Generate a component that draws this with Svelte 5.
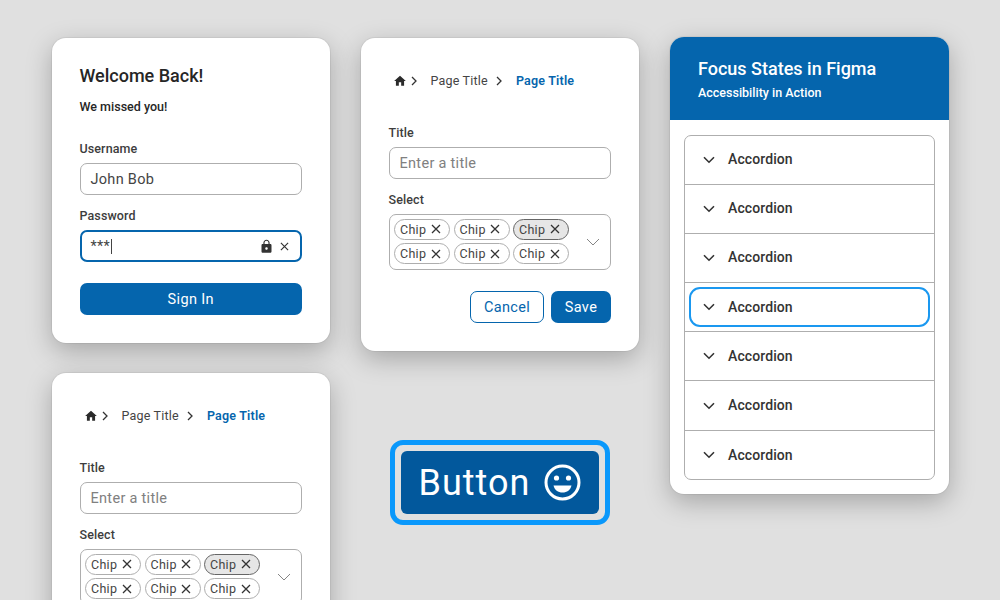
<script>
  const chips = [false, false, true, false, false, false];
  const rows = [false, false, false, true, false, false, false];
</script>

{#snippet closeIcon(size)}
  <svg class="x" width={size} height={size} viewBox="0 0 10 10"><path d="M1 1l8 8M9 1l-8 8" /></svg>
{/snippet}

{#snippet crumbArrow()}
  <svg class="crumb-arrow" width="6" height="10" viewBox="0 0 6 10"><path d="M1 1l4 4-4 4" /></svg>
{/snippet}

{#snippet formCard()}
  <div class="card form-card">
    <div class="crumbs">
      <svg class="home" width="14" height="14" viewBox="0 0 24 24"><path d="M10 20v-6h4v6h5v-8h3L12 3 2 12h3v8z" /></svg>
      {@render crumbArrow()}
      <span class="crumb">Page Title</span>
      {@render crumbArrow()}
      <span class="crumb current">Page Title</span>
    </div>

    <div class="label title-label">Title</div>
    <div class="input placeholder">Enter a title</div>

    <div class="label select-label">Select</div>
    <div class="select">
      <div class="chips">
        {#each chips as active}
          <span class="chip" class:active>Chip {@render closeIcon(10)}</span>
        {/each}
      </div>
      <svg class="select-arrow" width="14" height="8" viewBox="0 0 14 8"><path d="M1 1l6 6 6-6" /></svg>
    </div>

    <div class="actions">
      <button class="btn outline">Cancel</button>
      <button class="btn solid">Save</button>
    </div>
  </div>
{/snippet}

<div class="page">
  <div class="col col-1">
    <div class="card login">
      <h1>Welcome Back!</h1>
      <p class="sub">We missed you!</p>

      <div class="label user-label">Username</div>
      <div class="input">John Bob</div>

      <div class="label pass-label">Password</div>
      <div class="input focused">
        <span class="value">***<i class="caret"></i></span>
        <svg class="lock" width="15" height="15" viewBox="0 0 24 24"><path d="M18 8h-1V6c0-2.76-2.24-5-5-5S7 3.24 7 6v2H6c-1.1 0-2 .9-2 2v10c0 1.1.9 2 2 2h12c1.1 0 2-.9 2-2V10c0-1.1-.9-2-2-2zm-6 9c-1.1 0-2-.9-2-2s.9-2 2-2 2 .9 2 2-.9 2-2 2zm3.1-9H8.9V6c0-1.71 1.39-3.1 3.1-3.1 1.71 0 3.1 1.39 3.1 3.1v2z" /></svg>
        {@render closeIcon(9)}
      </div>

      <button class="btn solid sign-in">Sign In</button>
    </div>

    {@render formCard()}
  </div>

  <div class="col col-2">
    {@render formCard()}

    <div class="big-ring">
      <button class="big-button">
        Button
        <svg width="37" height="37" viewBox="0 0 37 37">
          <circle class="face" cx="18.5" cy="18.5" r="16.5" />
          <circle class="eye" cx="12.5" cy="14" r="2.6" />
          <circle class="eye" cx="24.5" cy="14" r="2.6" />
          <path class="eye" d="M9.5 21.5h18c-1 4.5-4.5 7-9 7s-8-2.500-9-7z" />
        </svg>
      </button>
    </div>
  </div>

  <div class="card col-3">
    <div class="header">
      <h2>Focus States in Figma</h2>
      <p>Accessibility in Action</p>
    </div>
    <div class="accordion">
      {#each rows as focus}
        <div class="row" class:focus>
          <div class="row-inner">
            <svg width="12" height="8" viewBox="0 0 12 8"><path d="M1 1.200l5 5 5-5" /></svg>
            <span>Accordion</span>
          </div>
        </div>
      {/each}
    </div>
  </div>
</div>

<style>
  :global(body) {
    background: #e0e0e0;
  }

  .page {
    display: flex;
    align-items: flex-start;
    gap: 31px;
    height: 600px;
    box-sizing: border-box;
    padding: 38px 0 0 52px;
    overflow: hidden;
    background: #e0e0e0;
    font-family: Roboto, "Liberation Sans", sans-serif;
    color: #333;
  }

  .col {
    display: flex;
    flex-direction: column;
    width: 278px;
    flex: none;
  }

  .col-1 {
    gap: 30px;
  }

  .card {
    flex: none;
    box-sizing: border-box;
    background: #fff;
    border-radius: 14px;
    box-shadow: 0 0 0 1px rgba(0, 0, 0, 0.05), 0 8px 26px rgba(0, 0, 0, 0.26);
  }

  .login {
    height: 305px;
    padding: 27px 28px 0 27.5px;
  }

  h1 {
    margin: 0;
    font-size: 18px;
    line-height: 21px;
    font-weight: 500;
    color: #262626;
  }

  .sub {
    margin: 13px 0 0;
    font-size: 12.5px;
    line-height: 15px;
    font-weight: 500;
    color: #262626;
  }

  .label {
    font-size: 12.5px;
    line-height: 15px;
    font-weight: 500;
    letter-spacing: 0.1px;
    color: #3d3d3d;
  }

  .user-label {
    margin-top: 27px;
    margin-bottom: 7px;
  }

  .pass-label {
    margin-top: 13px;
    margin-bottom: 7px;
  }

  .input {
    display: flex;
    align-items: center;
    box-sizing: border-box;
    height: 32px;
    padding: 0 10px;
    border: 1px solid #aeaeae;
    border-radius: 7px;
    font-size: 14.5px;
    letter-spacing: 0.3px;
    color: #444;
  }

  .placeholder {
    padding-top: 1px;
    color: #808080;
  }

  .focused {
    border: 2px solid #0565ad;
    padding: 0 11px 0 9px;
  }

  .value {
    flex: 1;
    display: flex;
    align-items: center;
  }

  .caret {
    display: inline-block;
    width: 1px;
    height: 15px;
    margin-left: 1px;
    background: #444;
  }

  .lock {
    fill: #333;
    margin-right: 6px;
  }

  .x {
    flex: none;
    fill: none;
    stroke: #333;
    stroke-width: 1.300;
  }

  .btn {
    box-sizing: border-box;
    height: 32px;
    border-radius: 7px;
    font-family: inherit;
    font-size: 14.500px;
    letter-spacing: 0.35px;
    padding: 1px 0 0;
  }

  .solid {
    background: #0565ad;
    border: none;
    color: #fff;
  }

  .outline {
    background: #fff;
    border: 1px solid #0565ad;
    color: #0565ad;
  }

  .sign-in {
    display: block;
    width: 100%;
    margin-top: 21px;
  }

  .form-card {
    height: 313px;
    padding: 34.5px 28px 0 27.5px;
  }

  .crumbs {
    display: flex;
    align-items: center;
    height: 16px;
    font-size: 12.5px;
    letter-spacing: 0.2px;
    margin-left: 4px;
  }

  .home {
    fill: #2b2b2b;
  }

  .crumb-arrow {
    fill: none;
    stroke: #333;
    stroke-width: 1.300;
    margin: 0 3px 0 4px;
  }

  .home + .crumb-arrow {
    margin-right: 14px;
  }

  .crumb {
    color: #444;
    margin-right: 4px;
  }

  .crumb + .crumb-arrow {
    margin-right: 14px;
  }

  .current {
    margin: 0;
    color: #0565ad;
    font-weight: 600;
  }

  .title-label {
    margin-top: 36px;
    margin-bottom: 7px;
  }

  .select-label {
    margin-top: 13px;
    margin-bottom: 7px;
  }

  .select {
    display: flex;
    align-items: center;
    justify-content: space-between;
    box-sizing: border-box;
    height: 56px;
    padding: 0 10px 0 4.5px;
    border: 1px solid #aeaeae;
    border-radius: 7px;
  }

  .chips {
    display: grid;
    grid-template-columns: repeat(3, 56px);
    gap: 3.500px;
  }

  .chip {
    display: flex;
    align-items: center;
    gap: 4.5px;
    box-sizing: border-box;
    height: 21px;
    padding-left: 5px;
    border: 1px solid #aeaeae;
    border-radius: 11px;
    font-size: 12.5px;
    letter-spacing: 0.3px;
    color: #444;
  }

  .chip.active {
    background: #e6e6e6;
    border-color: #666;
  }

  .select-arrow {
    fill: none;
    stroke: #777;
    stroke-width: 0.9;
  }

  .actions {
    display: flex;
    justify-content: flex-end;
    gap: 7px;
    margin-top: 21.5px;
  }

  .outline {
    width: 74px;
  }

  .actions .solid {
    width: 60px;
  }

  .big-ring {
    align-self: center;
    box-sizing: border-box;
    width: 220px;
    height: 85px;
    margin: 88.5px 0 0;
    padding: 6px;
    border: 5px solid #0a98fb;
    border-radius: 13px;
  }

  .big-button {
    display: flex;
    align-items: center;
    justify-content: center;
    gap: 14px;
    width: 100%;
    height: 100%;
    padding: 1px 0 0;
    border: none;
    border-radius: 6px;
    background: #02589c;
    color: #fff;
    font-family: inherit;
    font-size: 36px;
    font-weight: 400;
    letter-spacing: 1px;
  }

  .face {
    fill: none;
    stroke: #fff;
    stroke-width: 3;
  }

  .eye {
    fill: #fff;
  }

  .col-3 {
    width: 279px;
    height: 457px;
    margin-top: -1px;
    overflow: hidden;
  }

  .header {
    height: 83px;
    box-sizing: border-box;
    padding: 20.5px 28px 0;
    background: #0565ad;
    color: #fff;
  }

  h2 {
    margin: 0;
    font-size: 18px;
    line-height: 21px;
    font-weight: 500;
  }

  .header p {
    margin: 6.5px 0 0;
    font-size: 12.5px;
    line-height: 15px;
    font-weight: 500;
  }

  .accordion {
    box-sizing: border-box;
    height: 345.5px;
    margin: 14.5px 14px 0;
    border: 1px solid #aeaeae;
    border-radius: 7px;
  }

  .row {
    box-sizing: border-box;
    height: 49.2px;
    padding: 4px;
    border-bottom: 1px solid #aeaeae;
  }

  .row:last-child {
    border-bottom: none;
  }

  .row-inner {
    display: flex;
    align-items: center;
    gap: 13px;
    box-sizing: border-box;
    height: 100%;
    padding-left: 12px;
    border: 2px solid transparent;
    border-radius: 11px;
    font-size: 14px;
    font-weight: 500;
    letter-spacing: 0.1px;
    color: #333;
  }

  .row-inner span {
    margin-bottom: 1px;
  }

  .focus .row-inner {
    border-color: #1a98f0;
  }

  .row-inner svg {
    fill: none;
    stroke: #333;
    stroke-width: 1.600;
  }
</style>
